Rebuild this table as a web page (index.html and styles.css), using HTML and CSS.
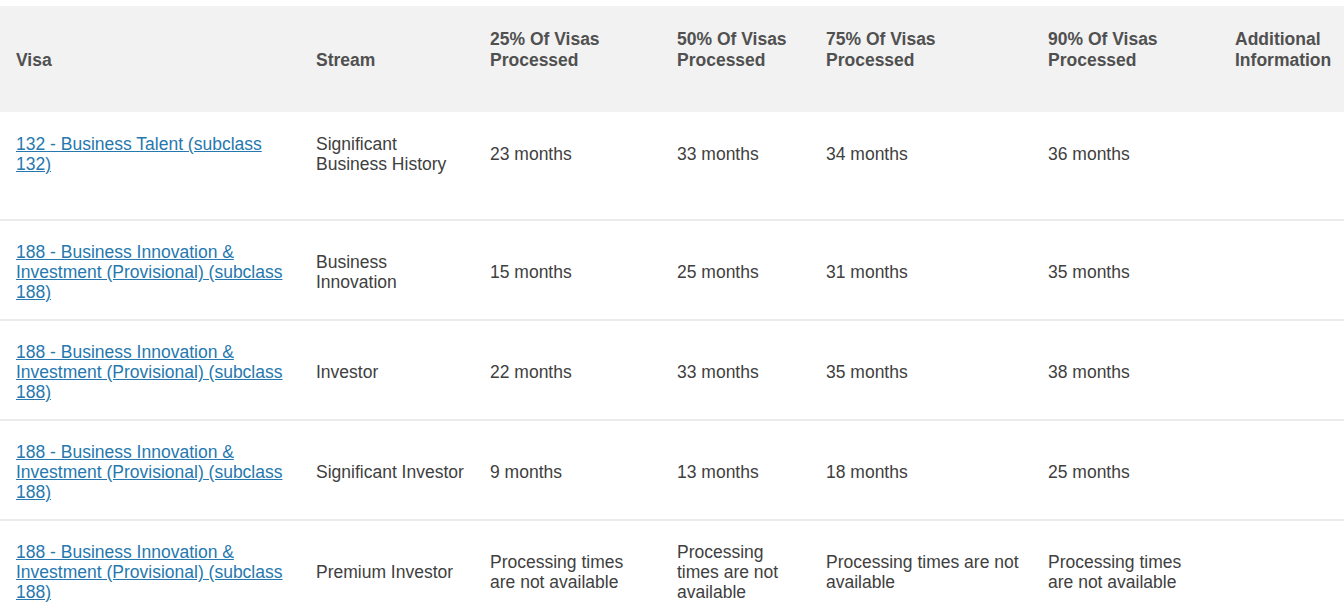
FILE: index.html
```html
<!DOCTYPE html>
<html>
<head>
<meta charset="utf-8">
<link rel="stylesheet" href="styles.css">
</head>
<body>
<div class="wrap">
<table class="times">
  <colgroup>
    <col class="c-visa"><col class="c-stream"><col class="c-p25"><col class="c-p50"><col class="c-p75"><col class="c-p90"><col class="c-add">
  </colgroup>
  <thead>
    <tr>
      <th>Visa</th>
      <th>Stream</th>
      <th class="pl14">25% Of Visas Processed</th>
      <th>50% Of Visas Processed</th>
      <th>75% Of Visas Processed</th>
      <th>90% Of Visas Processed</th>
      <th>Additional Information</th>
    </tr>
  </thead>
  <tbody>
    <tr class="first">
      <td><a href="#">132 - Business Talent (subclass 132)</a></td>
      <td>Significant Business History</td>
      <td class="pl14">23 months</td>
      <td>33 months</td>
      <td>34 months</td>
      <td>36 months</td>
      <td></td>
    </tr>
    <tr>
      <td><a href="#">188 - Business Innovation &amp; Investment (Provisional) (subclass 188)</a></td>
      <td>Business Innovation</td>
      <td class="pl14">15 months</td>
      <td>25 months</td>
      <td>31 months</td>
      <td>35 months</td>
      <td></td>
    </tr>
    <tr>
      <td><a href="#">188 - Business Innovation &amp; Investment (Provisional) (subclass 188)</a></td>
      <td>Investor</td>
      <td class="pl14">22 months</td>
      <td>33 months</td>
      <td>35 months</td>
      <td>38 months</td>
      <td></td>
    </tr>
    <tr>
      <td><a href="#">188 - Business Innovation &amp; Investment (Provisional) (subclass 188)</a></td>
      <td>Significant Investor</td>
      <td class="pl14">9 months</td>
      <td>13 months</td>
      <td>18 months</td>
      <td>25 months</td>
      <td></td>
    </tr>
    <tr class="last">
      <td><a href="#">188 - Business Innovation &amp; Investment (Provisional) (subclass 188)</a></td>
      <td>Premium Investor</td>
      <td class="pl14">Processing times are not available</td>
      <td>Processing times are not available</td>
      <td>Processing times are not available</td>
      <td>Processing times are not available</td>
      <td></td>
    </tr>
  </tbody>
</table>
</div>
</body>
</html>
```

FILE: styles.css
```css
html, body {
  margin: 0;
  padding: 0;
  background: #ffffff;
}
.wrap {
  padding-top: 6px;
  width: 1344px;
  overflow: hidden;
}
.times {
  table-layout: fixed;
  border-collapse: collapse;
  width: 1344px;
  font-family: "Liberation Sans", Arial, sans-serif;
  font-size: 17.5px;
  line-height: 20px;
  color: #404040;
}
.c-visa { width: 300px; }
.c-stream { width: 176px; }
.c-p25 { width: 185px; }
.c-p50 { width: 149px; }
.c-p75 { width: 222px; }
.c-p90 { width: 187px; }
.c-add { width: 125px; }

.times th {
  background: #f2f2f2;
  font-weight: bold;
  color: #505050;
  line-height: 21px;
  text-align: left;
  vertical-align: bottom;
  height: 106px;
  box-sizing: border-box;
  padding: 0 10px 41px 16px;
}
.times th:last-child {
  padding-right: 0;
}
.times td {
  vertical-align: middle;
  padding: 21px 10px 17px 16px;
  border-bottom: 2px solid #ebebeb;
}
.times .pl14 {
  padding-left: 14px;
}
.times tr.first td {
  padding-top: 22px;
  padding-bottom: 45px;
}
.times tr.last td {
  border-bottom: none;
}
.times a {
  color: #2678ae;
  text-decoration: underline;
}
```
